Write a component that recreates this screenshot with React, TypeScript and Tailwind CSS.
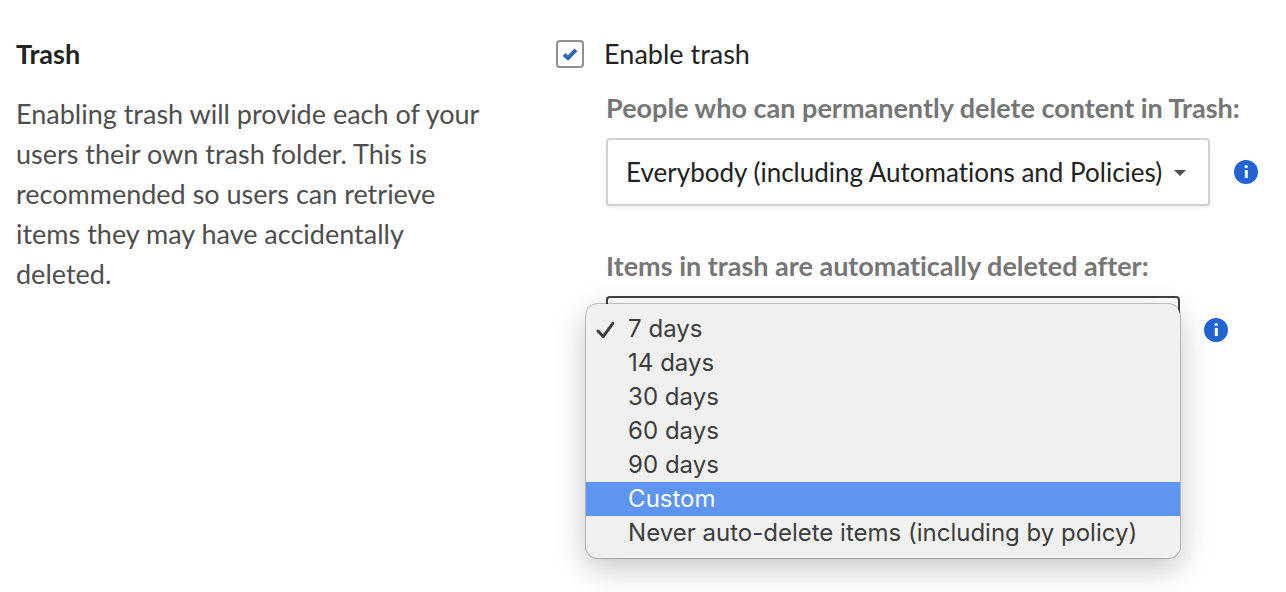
import { useState } from "react";

const retentionOptions = [
  "7 days",
  "14 days",
  "30 days",
  "60 days",
  "90 days",
  "Custom",
  "Never auto-delete items (including by policy)",
];

function InfoButton({ label }: { label: string }) {
  return (
    <button type="button" aria-label={label} className="size-6 shrink-0 rounded-full">
      <svg viewBox="0 0 24 24" className="size-6" aria-hidden="true">
        <circle cx="12" cy="12" r="12" fill="#2264d1" />
        <circle cx="12.2" cy="6.6" r="1.7" fill="#fff" />
        <path d="M10.8 10h3v8h-3z" fill="#fff" />
      </svg>
    </button>
  );
}

export default function App() {
  const [enabled, setEnabled] = useState(true);
  const [retention, setRetention] = useState("7 days");
  const [active, setActive] = useState("Custom");

  return (
    <main className="flex min-h-screen bg-white pt-[34px] pb-8 font-['Lato',sans-serif] text-[27px] leading-10 text-[#222] [font-variant-ligatures:none]">
      <section className="w-[42%] shrink-0 pr-12 pl-4">
        <h2 className="font-bold">Trash</h2>
        <p className="mt-5 text-[#4e4e4e]">
          Enabling trash will provide each of your users their own trash folder. This is
          recommended so users can retrieve items they may have accidentally deleted.
        </p>
      </section>

      <section className="min-w-0 flex-1 pl-4">
        <label className="flex h-10 items-center gap-5">
          <span className="relative flex size-7 shrink-0">
            <input
              type="checkbox"
              checked={enabled}
              onChange={(e) => setEnabled(e.target.checked)}
              className="size-7 appearance-none rounded-[4px] border-2 border-[#909090] bg-white"
            />
            {enabled && (
              <svg
                viewBox="0 0 28 28"
                className="pointer-events-none absolute inset-0 size-7"
                aria-hidden="true"
              >
                <path
                  d="M8 14.4 12 18 20 9.8"
                  fill="none"
                  stroke="#3564b8"
                  strokeWidth="4"
                />
              </svg>
            )}
          </span>
          Enable trash
        </label>

        <div className="pl-[50px]">
          <label
            htmlFor="permanent-delete"
            className="mt-3.5 block font-bold whitespace-nowrap text-[#767676]"
          >
            People who can permanently delete content in Trash:
          </label>
          <div className="mt-2.5 flex items-center gap-6">
            <div className="relative w-[604px]">
              <select
                id="permanent-delete"
                className="block h-[68px] w-full appearance-none rounded-[4px] border-2 border-[#d0d0d0] bg-white pr-10 pl-[18px] text-[26px] shadow-[0_3px_3px_rgba(0,0,0,0.06)]"
              >
                <option>Everybody (including Automations and Policies)</option>
              </select>
              <svg
                viewBox="0 0 12 6"
                className="pointer-events-none absolute top-8 right-6 h-1.5 w-3"
                aria-hidden="true"
              >
                <path d="M0 0h12L6 6z" fill="#4e4e4e" />
              </svg>
            </div>
            <InfoButton label="About permanent deletion" />
          </div>

          <label
            htmlFor="auto-delete"
            className="mt-10 block font-bold whitespace-nowrap text-[#767676]"
          >
            Items in trash are automatically deleted after:
          </label>
          <div className="mt-2.5 flex items-center gap-6">
            <div className="relative w-[574px]">
              <select
                id="auto-delete"
                value={retention}
                onChange={(e) => setRetention(e.target.value)}
                className="block h-[68px] w-full appearance-none rounded-[4px] border-2 border-[#404042] bg-white pl-[18px] text-[26px]"
              >
                {retentionOptions.map((option) => (
                  <option key={option}>{option}</option>
                ))}
              </select>
              <ul
                role="listbox"
                aria-label="Items in trash are automatically deleted after"
                className="absolute top-2 right-0 -left-5 overflow-hidden rounded-[12px] bg-[#f0f0f0] py-2 font-['Inter',sans-serif] text-[24px] leading-[34px] text-[#3c3c3c] shadow-[0_0_0_1px_rgba(0,0,0,0.22),0_10px_32px_rgba(0,0,0,0.24)]"
              >
                {retentionOptions.map((option) => (
                  <li
                    key={option}
                    role="option"
                    aria-selected={option === retention}
                    onMouseEnter={() => setActive(option)}
                    onClick={() => setRetention(option)}
                    className={
                      option === active
                        ? "flex items-center bg-[#5e95f1] text-white"
                        : "flex items-center"
                    }
                  >
                    <span className="flex w-[42px] shrink-0 pl-2.5">
                      {option === retention && (
                        <svg viewBox="0 0 20 20" className="size-5" aria-hidden="true">
                          <path
                            d="M2 12 7.2 17.6 16.8 4.4"
                            fill="none"
                            stroke="currentColor"
                            strokeWidth="3"
                            strokeLinecap="round"
                            strokeLinejoin="round"
                          />
                        </svg>
                      )}
                    </span>
                    <span className="whitespace-nowrap">{option}</span>
                  </li>
                ))}
              </ul>
            </div>
            <InfoButton label="About automatic deletion" />
          </div>
        </div>
      </section>
    </main>
  );
}
